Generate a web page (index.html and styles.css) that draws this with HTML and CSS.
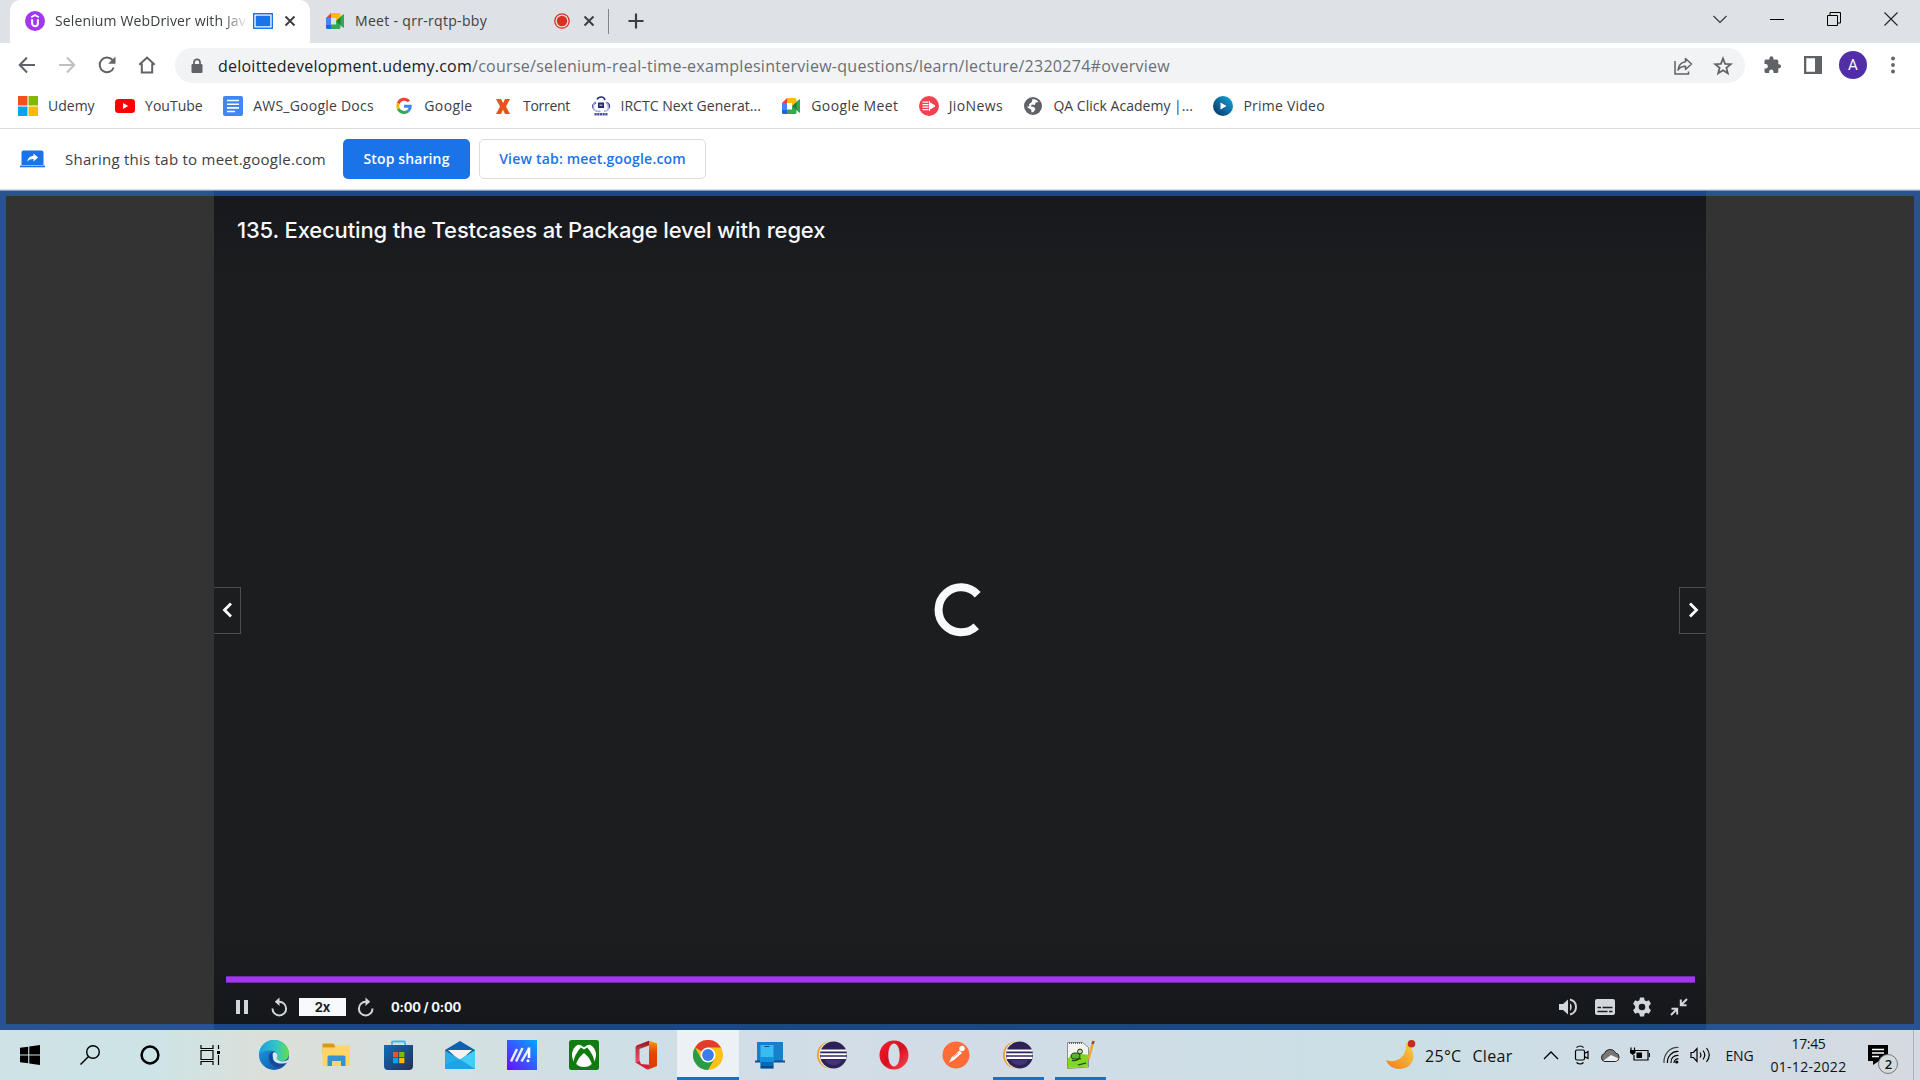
FILE: index.html
```html
<!DOCTYPE html>
<html lang="en">
<head>
<meta charset="utf-8">
<title>Selenium WebDriver with Java</title>
<link rel="stylesheet" href="styles.css">
</head>
<body>
<svg class="defs" width="0" height="0">
  <defs>
    <linearGradient id="edgeA" x1="0" y1="0" x2="1" y2="0"><stop offset="0" stop-color="#1b9de2"/><stop offset=".6" stop-color="#35c6c0"/><stop offset="1" stop-color="#66e04a"/></linearGradient>
    <linearGradient id="edgeB" x1="0" y1="0" x2="1" y2="1"><stop offset="0" stop-color="#1fa0e8"/><stop offset="1" stop-color="#0c4a9a"/></linearGradient>
    <linearGradient id="storeG" x1="0" y1="0" x2="1" y2="1"><stop offset="0" stop-color="#0f6cbd"/><stop offset="1" stop-color="#262f52"/></linearGradient>
    <linearGradient id="asusG" x1="1" y1="0" x2="0" y2="1"><stop offset="0" stop-color="#00a8ff"/><stop offset="1" stop-color="#6a0cff"/></linearGradient>
    <linearGradient id="moonG" x1="1" y1="0" x2="0" y2="1"><stop offset="0" stop-color="#f8cf45"/><stop offset="1" stop-color="#ef7d1c"/></linearGradient>
    <linearGradient id="operaG" x1="0" y1="0" x2="1" y2="1"><stop offset="0" stop-color="#ff1b2d"/><stop offset=".5" stop-color="#d3101f"/><stop offset="1" stop-color="#ff4a55"/></linearGradient>
    <linearGradient id="primeG" x1="1" y1="0" x2="0" y2="1"><stop offset="0" stop-color="#18a8e0"/><stop offset="1" stop-color="#04305e"/></linearGradient>
    <linearGradient id="officeG" x1="0" y1="0" x2="0" y2="1"><stop offset="0" stop-color="#8c1010"/><stop offset=".4" stop-color="#c43a4a"/><stop offset="1" stop-color="#e8506a"/></linearGradient>
    <linearGradient id="officeH" x1="0" y1="0" x2="0" y2="1"><stop offset="0" stop-color="#f59a12"/><stop offset=".4" stop-color="#e04a08"/><stop offset="1" stop-color="#d83b01"/></linearGradient>
    <symbol id="meet" viewBox="0 0 20 20"><path d="M1 7 6 2v5z" fill="#ea4335"/><path d="M6 2h8a1.500 1.500 0 0 1 1.500 1.500V7L11 10V7H6z" fill="#fbbc04"/><path d="M1 7h5v7H1z" fill="#4285f4"/><path d="M1 14h5v4H2.500A1.500 1.500 0 0 1 1 16.500z" fill="#1967d2"/><path d="M6 13.500h5V10l4.500 3v3.500A1.500 1.500 0 0 1 14 18H6z" fill="#34a853"/><path d="M11 10l7-6.200c.5-.4 1-.1 1 .5v11.400c0 .6-.5.9-1 .5z" fill="#188038"/><path d="M15.500 6l2.500-2.200c.5-.4 1-.1 1 .5v11.400c0 .6-.5.9-1 .5L15.500 14z" fill="#34a853"/></symbol>
    <symbol id="eclipse" viewBox="0 0 30 30"><ellipse cx="13" cy="15" rx="13" ry="13.500" fill="#f29a2e"/><ellipse cx="14.800" cy="15" rx="13" ry="13.800" fill="#f1e6d8"/><circle cx="16.500" cy="15" r="13.500" fill="#2c2255"/><path d="M8 20c2 4 5 5 8.500 5s6.500-1 8.500-5z" fill="#4a3a8a" opacity=".7"/><path d="M3.500 10.500h26M3.200 14.200h26.500M3.500 18h26" stroke="#fff" stroke-width="1.800"/><path d="M3.500 16h26" stroke="#8d83b5" stroke-width="1.200"/></symbol>
    <symbol id="x" viewBox="0 0 12 12"><path d="M1.500 1.500l9 9M10.500 1.500l-9 9" stroke="#3c4043" stroke-width="2" fill="none"/></symbol>
  </defs>
</svg>

<header class="tabstrip">
  <div class="tab tab-active">
    <svg width="20" height="20" viewBox="0 0 20 20"><circle cx="10" cy="10" r="10" fill="#a435f0"/><path d="M6.200 6.300 10 4l3.800 2.300" fill="none" stroke="#fff" stroke-width="1.800"/><path d="M7.100 8.300v4a2.900 2.900 0 0 0 5.800 0v-4" fill="none" stroke="#fff" stroke-width="2"/></svg>
    <span class="tab-title fade">Selenium WebDriver with Jav</span>
    <svg class="tab-state" width="20" height="16" viewBox="0 0 20 16"><path d="M.7.700h18.600v14.600H.7z" fill="#fff" stroke="#1a73e8" stroke-width="1.400"/><path d="M2.700 2.700h14.600v10.600H2.700z" fill="#1a73e8"/></svg>
    <svg class="tab-close" width="12" height="12"><use href="#x"/></svg>
  </div>
  <div class="tab tab-meet">
    <svg width="20" height="20"><use href="#meet"/></svg>
    <span class="tab-title">Meet - qrr-rqtp-bby</span>
    <svg class="tab-state" width="16" height="16" viewBox="0 0 16 16"><circle cx="8" cy="8" r="7.200" fill="none" stroke="#d93025" stroke-width="1.300"/><circle cx="8" cy="8" r="5.200" fill="#d93025"/></svg>
    <svg class="tab-close" width="12" height="12"><use href="#x"/></svg>
  </div>
  <span class="tab-sep"></span>
  <svg class="newtab" width="16" height="16" viewBox="0 0 16 16"><path d="M8 .5v15M.5 8h15" stroke="#3c4043" stroke-width="2.200"/></svg>
  <div class="win-controls">
    <svg width="14" height="14" viewBox="0 0 14 14"><path d="M.5 4 7 10.500 13.500 4" fill="none" stroke="#333" stroke-width="1.100"/></svg>
    <svg width="14" height="14" viewBox="0 0 14 14"><path d="M0 7.500h14" stroke="#000"/></svg>
    <svg width="14" height="14" viewBox="0 0 14 14"><path d="M.5 3.500h10v10H.5zM3 3.500V.5h10.500v10.500h-3" fill="none" stroke="#000"/></svg>
    <svg width="14" height="14" viewBox="0 0 14 14"><path d="M.5.500l13 13M13.500.500l-13 13" stroke="#222" stroke-width="1.100"/></svg>
  </div>
</header>

<div class="toolbar">
  <nav class="nav-buttons">
    <svg width="20" height="20" viewBox="0 0 20 20"><path d="M18 10H3M10 2.500 2.700 10l7.300 7.500" fill="none" stroke="#5f6368" stroke-width="2"/></svg>
    <svg width="20" height="20" viewBox="0 0 20 20"><path d="M2 10h15M10 2.500l7.300 7.500-7.300 7.500" fill="none" stroke="#bdc1c6" stroke-width="2"/></svg>
    <svg width="20" height="20" viewBox="0 0 20 20"><path d="M16.800 12.500A7.300 7.300 0 1 1 15.500 5" fill="none" stroke="#5f6368" stroke-width="2"/><path d="M18.500 1.500v7.300h-7.300z" fill="#5f6368"/></svg>
    <svg width="20" height="20" viewBox="0 0 20 20"><path d="M2.300 9.700 10 2.500l7.700 7.200M4.800 8.500v9h10.400v-9" fill="none" stroke="#5f6368" stroke-width="2"/></svg>
  </nav>
  <div class="omnibox">
    <svg width="12" height="16" viewBox="0 0 12 16"><path d="M3 6.500V4.300a3 3 0 0 1 6 0v2.200" fill="none" stroke="#5f6368" stroke-width="1.700"/><rect x=".5" y="6" width="11" height="9" rx="1.300" fill="#5f6368"/></svg>
    <span class="url"><span class="host">deloittedevelopment.udemy.com</span><span class="path">/course/selenium-real-time-examplesinterview-questions/learn/lecture/2320274#overview</span></span>
    <svg class="share" width="20" height="20" viewBox="0 0 20 20"><path d="M2 5v13h13.500v-2.500" fill="none" stroke="#5f6368" stroke-width="1.500"/><path d="M12.500 2.500 18.500 8l-6 5.500v-3.300c-3.500 0-5.800 1-7.500 3.800.5-4 2.800-7.600 7.500-8.200z" fill="none" stroke="#5f6368" stroke-width="1.500" stroke-linejoin="round"/></svg>
    <svg width="20" height="20" viewBox="0 0 20 20"><path d="M10 2.500l2.100 5.300 5.700.4-4.400 3.600 1.400 5.500L10 14.300l-4.800 3 1.400-5.500-4.400-3.600 5.700-.4z" fill="none" stroke="#5f6368" stroke-width="1.800"/></svg>
  </div>
  <div class="actions">
    <svg width="20" height="20" viewBox="0 0 20 20"><path d="M16.500 9.300h-1.200V6A1.600 1.600 0 0 0 13.700 4.400h-3.300V3.200a2 2 0 0 0-4 0v1.200H3A1.600 1.600 0 0 0 1.500 6v3h1.200a2.200 2.200 0 0 1 0 4.400H1.500v3A1.600 1.600 0 0 0 3 18h3.100v-1.200a2.200 2.200 0 0 1 4.400 0V18h3.200a1.600 1.600 0 0 0 1.600-1.600v-3.200h1.200a2 2 0 0 0 0-3.900z" fill="#5f6368"/></svg>
    <svg width="20" height="20" viewBox="0 0 20 20"><path d="M1 1h18v18H1zM3.300 3.300v13.400H12V3.300z" fill="#5f6368" fill-rule="evenodd"/></svg>
    <span class="avatar">A</span>
    <svg width="4" height="18" viewBox="0 0 4 18"><g fill="#5f6368"><circle cx="2" cy="2.500" r="1.900"/><circle cx="2" cy="9" r="1.900"/><circle cx="2" cy="15.500" r="1.900"/></g></svg>
  </div>
</div>

<nav class="bookmarks">
  <a><svg width="20" height="20" viewBox="0 0 20 20"><path d="M0 0h9.500v9.500H0z" fill="#f25022"/><path d="M10.500 0H20v9.500h-9.500z" fill="#7fba00"/><path d="M0 10.500h9.500V20H0z" fill="#00a4ef"/><path d="M10.500 10.500H20V20h-9.500z" fill="#ffb900"/></svg><span>Udemy</span></a>
  <a><svg width="20" height="20" viewBox="0 0 20 20"><rect y="3" width="20" height="14" rx="3.500" fill="#f00"/><path d="M8 7l5.200 3L8 13z" fill="#fff"/></svg><span>YouTube</span></a>
  <a class="ls-2"><svg width="20" height="20" viewBox="0 0 20 20"><rect width="20" height="20" rx="2" fill="#4285f4"/><path d="M4 4.500h12M4 8.200h12M4 11.900h12M4 15.500h8" stroke="#fff" stroke-width="1.600"/></svg><span>AWS_Google Docs</span></a>
  <a class="ls-3"><svg width="20" height="20" viewBox="0 0 20 20"><g fill="none" stroke-width="3"><path d="M15 5.200A6.400 6.400 0 0 0 4.300 7.400" stroke="#ea4335"/><path d="M4.300 7.400a6.400 6.400 0 0 0 0 5.400" stroke="#fbbc05"/><path d="M4.300 12.800a6.400 6.400 0 0 0 10 2" stroke="#34a853"/><path d="M14.300 14.800A6 6 0 0 0 16.300 10.200H10" stroke="#4285f4"/></g></svg><span>Google</span></a>
  <a class="ls-tight"><svg width="20" height="20" viewBox="0 0 20 20"><path d="M3 3h5l2.200 4L12 3h5l-4 7.500L17 18h-5l-2-4.300L8 18H3l4-7.500z" fill="#e5541b"/></svg><span>Torrent</span></a>
  <a class="ls-0"><svg width="20" height="20" viewBox="0 0 20 20"><path d="M6 3.500Q7 1 10.500 1 13 1 14 4M5 6.500Q0 9 2.500 12.500M15.500 6.500Q20 9 17.500 12.500" fill="none" stroke="#23297e" stroke-width="1.600"/><path d="M4.500 5.500q-3.500 4-1.500 8 3.500 3 6.500 1.500M15 6q3.500 4 2 7.500-2 2-4 1.700" fill="none" stroke="#a9acd8" stroke-width="1.600"/><path d="M7 6.500h6v5.500H7z" fill="#23297e"/><path d="M8.500 9.200h3" stroke="#c9cbe8" stroke-width="1.200"/><path d="M3.500 18.200h13.500" stroke="#4a4f9c" stroke-width="2.600" stroke-dasharray="2.200 .5"/></svg><span>IRCTC Next Generat...</span></a>
  <a class="ls-3"><svg width="20" height="20"><use href="#meet"/></svg><span>Google Meet</span></a>
  <a class="ls-3"><svg width="20" height="20" viewBox="0 0 20 20"><circle cx="10" cy="10" r="10" fill="#f5414f"/><path d="M3.500 6.200h6M3.500 8.700h6M3.500 11.200h6M3.500 13.700h6" stroke="#fff" stroke-width="1.300"/><path d="M10.500 5v10M11.500 7l4.500 3-4.500 3z" stroke="#fff" stroke-width="1" fill="#fff"/></svg><span>JioNews</span></a>
  <a class="ls-0"><svg width="20" height="20" viewBox="0 0 20 20"><circle cx="10" cy="10" r="9" fill="#5f6368"/><path d="M9 3.500c3-1 5 .5 6.500 2.500l-2.800.5-1 2.500-3-.5-.7 2 3 .5 1.500 2-2 3-2 .5-.3-3-3-1.500L3 9.500C3.500 11 8 11 6 8.500 7 7 10 6.500 9 3.500z" fill="#fff"/></svg><span>QA Click Academy |...</span></a>
  <a class="ls-2"><svg width="20" height="20" viewBox="0 0 20 20"><circle cx="10" cy="10" r="10" fill="url(#primeG)"/><path d="M7.500 6.500l6 3.500-6 3.500z" fill="#fff"/></svg><span>Prime Video</span></a>
</nav>

<section class="infobar">
  <svg width="25" height="18" viewBox="0 0 25 18"><path d="M3.500.500h18a2 2 0 0 1 2 2V15h-22V2.500a2 2 0 0 1 2-2z" fill="#1a73e8"/><path d="M0 15.500h25v1.800H0z" fill="#1a73e8"/><path d="M13.500 3.500 18 7.500l-4.500 4V9c-3 0-4.800.7-6.300 2.800.5-3 2.300-5.500 6.300-6z" fill="#fff"/></svg>
  <span class="info-text">Sharing this tab to meet.google.com</span>
  <button class="btn btn-primary">Stop sharing</button>
  <button class="btn btn-plain">View tab: meet.google.com</button>
</section>

<main class="shared">
  <section class="player">
    <h1 class="lecture">135. Executing the Testcases at Package level with regex</h1>
    <div class="stage">
      <span class="side prev"><svg width="11" height="16" viewBox="0 0 11 16"><path d="M9 1.500 2.500 8 9 14.500" fill="none" stroke="#fff" stroke-width="2.800"/></svg></span>
      <svg class="spinner" width="54" height="54" viewBox="0 0 54 54"><path d="M43.700 11.700A22.500 22.500 0 1 0 42.300 43.400" fill="none" stroke="#f7f9fa" stroke-width="8"/></svg>
      <span class="side next"><svg width="11" height="16" viewBox="0 0 11 16"><path d="M2 1.500 8.500 8 2 14.500" fill="none" stroke="#fff" stroke-width="2.800"/></svg></span>
    </div>
    <div class="progress"></div>
    <div class="controls">
      <svg class="pause" width="12" height="14" viewBox="0 0 12 14"><path d="M0 0h4v14H0zM8 0h4v14H8z" fill="#d1d7dc"/></svg>
      <svg class="back" width="18" height="20" viewBox="0 0 18 20"><path d="M2.500 11.500A6.800 6.800 0 1 0 9 4.800" fill="none" stroke="#d1d7dc" stroke-width="2"/><path d="M9.500.500v8.600L4.800 4.800z" fill="#d1d7dc"/></svg>
      <span class="rate">2x</span>
      <svg class="fwd" width="18" height="20" viewBox="0 0 18 20"><path d="M15.500 11.500A6.800 6.800 0 1 1 9 4.800" fill="none" stroke="#d1d7dc" stroke-width="2"/><path d="M8.500.500v8.600l4.700-4.300z" fill="#d1d7dc"/></svg>
      <span class="time">0:00 / 0:00</span>
      <div class="right">
        <svg width="20" height="20" viewBox="0 0 20 20"><path d="M1 7v6h4l5 4.500v-15L5 7z" fill="#d1d7dc"/><path d="M12 6.200c2.200 1.500 2.200 6 0 7.600z" fill="#d1d7dc"/><path d="M12 2.500c8 2 8 13 0 15" fill="none" stroke="#d1d7dc" stroke-width="1.900"/></svg>
        <svg width="20" height="20" viewBox="0 0 20 20"><rect y="2" width="20" height="16" rx="2" fill="#d1d7dc"/><path d="M2.500 10.500H6M7.500 10.500h10M2.500 14.500h10M14 14.500h3.500" stroke="#1c1d1f" stroke-width="1.600"/></svg>
        <svg width="20" height="20" viewBox="0 0 20 20"><path d="M8 .5h4l.6 2.700 1.700 1 2.600-.9 2 3.500L16.900 9v2l2 2.200-2 3.500-2.600-.9-1.700 1-.6 2.700H8l-.6-2.700-1.700-1-2.600.9-2-3.500L3.100 11V9l-2-2.200 2-3.500 2.600.9 1.700-1zM10 6.700a3.300 3.300 0 1 0 0 6.600 3.300 3.300 0 0 0 0-6.600z" fill="#d1d7dc" fill-rule="evenodd"/></svg>
        <svg width="20" height="20" viewBox="0 0 20 20"><path d="M18 2l-5.500 5.500M11.800 2.500v5.700h5.700M2 18l5.500-5.500M2.500 11.800h5.700v5.700" fill="none" stroke="#d1d7dc" stroke-width="2"/></svg>
      </div>
    </div>
  </section>
</main>

<footer class="taskbar">
  <div class="apps">
    <span class="app sys"><svg width="20" height="20" viewBox="0 0 20 20"><path d="M0 2.800 8.200 1.700v7.800H0zM9.300 1.500 20 0v9.500H9.300zM0 10.500h8.200v7.800L0 17.200zM9.300 10.500H20V20L9.300 18.500z"/></svg></span>
    <span class="app sys"><svg width="20" height="20" viewBox="0 0 20 20"><circle cx="13" cy="7" r="6.300" fill="none" stroke="#000" stroke-width="1.400"/><path d="M8.500 11.500.5 19.500" stroke="#000" stroke-width="1.500"/></svg></span>
    <span class="app sys"><svg width="20" height="20" viewBox="0 0 20 20"><circle cx="10" cy="10" r="8.400" fill="none" stroke="#000" stroke-width="2.500"/></svg></span>
    <span class="app sys"><svg width="20" height="20" viewBox="0 0 20 20"><path d="M1 0v3.500h12V0M1 20v-3.500h12V20M1 5.500h12v9H1zM18.500 0v4M18.500 10v10" fill="none" stroke="#000" stroke-width="1.200"/><path d="M17 6h3v3h-3z"/></svg></span>
    <span class="app pinned-first"><svg width="30" height="30" viewBox="0 0 30 30"><circle cx="15" cy="15" r="15" fill="url(#edgeB)"/><path d="M0 14C.5 6 7 0 15 0c9 0 15 6.500 15 13.500 0 5-4 8-8.500 8-4 0-5-1.500-4-3 2.500-3.500 0-8-5.500-8-5 0-9.500 1.500-12 3.500z" fill="url(#edgeA)"/><path d="M10 17c-.5 6.500 5 11 11 10 2.500-.5 5.500-2.500 7-5.500-6 2.800-13 1.500-14.500-3-1-3 1-6 2.500-7-3.500-.3-6 2-6 5.500z" fill="#15479a"/><path d="M14 17.500c0-2.500-1-4 .5-5 3-1 5 3 3.500 5-.7 1.200 0 2 1.500 3 3 1.500 7 1 9.500-.8l.5 2c-6 3.500-15.500 2-15.500-4.200z" fill="#d7e8ee"/></svg></span>
    <span class="app"><svg width="30" height="30" viewBox="0 0 30 30"><path d="M1.500 3.500h11l2 3H28V14H1.500z" fill="#dc9a10"/><path d="M1.500 7.500h12l2-2H29v20.500H1.500z" fill="#ffd566"/><path d="M6.500 26v-9q0-1.500 1.500-1.500h15q1.500 0 1.500 1.500v9h-4.500v-5h-9v5z" fill="#3a8fd6"/></svg></span>
    <span class="app"><svg width="30" height="30" viewBox="0 0 30 30"><path d="M9 6V2.500Q9 1.500 10 1.500h11Q22 1.500 22 2.500V6" fill="none" stroke="#39bdf0" stroke-width="1.900"/><path d="M1 5h29v21q0 4-4 4H5q-4 0-4-4z" fill="url(#storeG)"/><path d="M10 12h5.200v5.200H10z" fill="#f25022"/><path d="M16.200 12h5.200v5.200h-5.200z" fill="#7fba00"/><path d="M10 18h5.200v5.200H10z" fill="#00a4ef"/><path d="M16.200 18h5.200v5.200h-5.200z" fill="#ffb900"/></svg></span>
    <span class="app"><svg width="30" height="30" viewBox="0 0 30 30"><path d="M0 10 15 1l15 9v8H0z" fill="#0a62b0"/><path d="M3 10h24L15 21z" fill="#f3f3f5"/><path d="M0 10.500 15 19.500 30 10.500V29H0z" fill="#25aeea"/><path d="M15 19.500 30 10.500V29z" fill="#45cdf5"/><path d="M15 19.500 30 29H0V24z" fill="#1b9be0" opacity=".6"/></svg></span>
    <span class="app"><svg width="30" height="30" viewBox="0 0 30 30"><path d="M0 0h30v30H0z" fill="url(#asusG)"/><path d="M4 21.500 10 9M9 21.500 15.500 8M14.500 21.500 22 8.500" stroke="#e6ecff" stroke-width="2.500" fill="none"/><path d="M22 7.500V18" stroke="#fff" stroke-width="2.600"/><circle cx="21" cy="20.800" r="1.500" fill="#fff"/></svg></span>
    <span class="app"><svg width="30" height="30" viewBox="0 0 30 30"><rect width="30" height="30" rx="2.500" fill="#107c10"/><circle cx="15" cy="15" r="12" fill="#fff"/><path d="M7.500 4.600C10 4 12.500 5.500 15 7.200c2.500-1.700 5-3.200 7.500-2.600L21 1.500H9zM15 9.500l-3.200-2C8 12 4.500 17.500 4.800 22.500l2.200 2.800c.7-5 4.500-9.500 8-12.300 3.500 2.800 7.300 7.300 8 12.300l2.200-2.800c.3-5-3.200-10.500-7-15z" fill="#107c10"/></svg></span>
    <span class="app"><svg width="30" height="30" viewBox="0 0 30 30"><path d="M18 .8 6 5.200 4.500 7v15.500l4-2V9l9.500-3.500z" fill="url(#officeG)"/><path d="M18 .8 26 3.500V26l-8 3.200z" fill="url(#officeH)"/><path d="M4.500 22.500 8.500 20.500 10 24l8 .8v4.400l-2 .3z" fill="#d8203a"/></svg></span>
    <span class="app focused"><svg width="30" height="30" viewBox="0 0 30 30"><circle cx="15" cy="15" r="15" fill="#fbc116"/><path d="M15 15 2 7.500A15 15 0 0 1 28 7.500H15z" fill="#e33b2e"/><path d="M2 7.500A15 15 0 0 0 15 30l6.500-11.300L15 15l-6.500 3.700z" fill="#2a9b48"/><circle cx="15" cy="15" r="7.500" fill="#fff"/><circle cx="15" cy="15" r="5.900" fill="#3b7ded"/></svg></span>
    <span class="app"><svg width="30" height="30" viewBox="0 0 30 30"><path d="M2 2h26v19H2z" fill="#1580cc"/><path d="M0 20.500h30v2H0z" fill="#0c5192"/><path d="M5.500 5h13v23.500h-13z" fill="#38bdf2"/><path d="M5.500 17h13v5h-13z" fill="#1690dc"/><path d="M5.500 22h13v4h-13z" fill="#0768b8"/><path d="M5.500 26h13v2.500h-13z" fill="#0a4a86"/><path d="M9.500 6.500h5" stroke="#0c5192"/></svg></span>
    <span class="app"><svg width="30" height="30"><use href="#eclipse"/></svg></span>
    <span class="app"><svg width="30" height="30" viewBox="0 0 30 30"><path d="M15 .5a14.500 14.500 0 1 0 0 29 14.500 14.500 0 0 0 0-29zm0 3c3.500 0 5.700 5 5.700 11.500S18.500 26.500 15 26.500 9.300 21.500 9.300 15 11.500 3.500 15 3.500z" fill="url(#operaG)" fill-rule="evenodd"/></svg></span>
    <span class="app"><svg width="30" height="30" viewBox="0 0 30 30"><circle cx="15" cy="15" r="13.500" fill="#ff6c37"/><circle cx="21" cy="8.500" r="2.700" fill="#fff"/><path d="M18.500 10.500 21 13l-8 7-5 2.500 2.500-5z" fill="#fff"/><path d="M12.500 17 17 13" stroke="#ff6c37" stroke-width=".8"/></svg></span>
    <span class="app running"><svg width="30" height="30"><use href="#eclipse"/></svg></span>
    <span class="app running"><svg width="30" height="30" viewBox="0 0 30 30"><path d="M2.500 2.500h15l6 5V27l-21 1.500z" fill="#f2f5f0" stroke="#777" stroke-width=".8"/><path d="M3 18q10-6 20-3v11.500L3 28z" fill="#80d820"/><path d="M4 3h13" stroke="#666" stroke-width="2" stroke-dasharray="1 1"/><ellipse cx="10.500" cy="16" rx="4.500" ry="3" fill="#54b82c" stroke="#1c3a12"/><circle cx="15" cy="11.500" r="2.400" fill="#b9e29a" stroke="#222"/><path d="M7 20c4 3 7-3 9-1M13 25l8-2" stroke="#1c3a12" fill="none" stroke-width="1.200"/><path d="M28 2.500 23.500 19" stroke="#e6ab2c" stroke-width="2.500"/><path d="M28.500 1l-.8 3" stroke="#8c4a38" stroke-width="2.500"/></svg></span>
  </div>
  <div class="tray">
    <svg class="moon" width="30" height="30" viewBox="0 0 30 30"><path d="M20 3c13 9 8 26-7 26C7 29 2 25.500 0 20c10 4 21-2 20-17z" fill="url(#moonG)"/><circle cx="25.500" cy="3.800" r="3.800" fill="#c42b1c"/></svg>
    <span class="temp">25°C</span>
    <span class="sky">Clear</span>
    <svg class="caret" width="16" height="16" viewBox="0 0 16 16"><path d="M1 12 8 5l7 7" fill="none" stroke="#000" stroke-width="1.300"/></svg>
    <svg class="cam" width="16" height="20" viewBox="0 0 16 20"><path d="M2.500 2.500q4-3 7 0M2.500 17.500q4 3 7 0M3 5h6q1.500 0 1.500 1.500v7Q10.500 15 9 15H3q-1.500 0-1.500-1.500v-7Q1.500 5 3 5zM10.500 8.500l3.500-2v7l-3.500-2" fill="none" stroke="#000" stroke-width="1.200"/></svg>
    <svg class="cloud" width="20" height="16" viewBox="0 0 20 16"><path d="M5 14.500a4 4 0 0 1-.7-7.800A6 6 0 0 1 15.500 6a4.300 4.300 0 0 1-.2 8.500z" fill="#777" stroke="#222"/><path d="M3.500 13.500 11 8l7.500 3.500q-1 2.500-3.200 2.500H5z" fill="#eee"/></svg>
    <svg class="batt" width="20" height="16" viewBox="0 0 20 16"><path d="M5 3.500h13v9.500H4V8" fill="none" stroke="#000" stroke-width="1.200"/><path d="M6.500 5.500H12V11H6.500z"/><path d="M19.400 6v4M1 .5v3M4.500.500v3" stroke="#000" stroke-width="1.200"/><path d="M0 3h5.500v3L2.700 8 0 6z"/></svg>
    <svg class="wifi" width="16" height="18" viewBox="0 0 16 18"><g fill="none" stroke="#000" stroke-width="1.200"><path d="M1 17C.5 8 7 1 15.500 1.500" opacity=".7"/><path d="M4.500 17C4 10.500 9 5 15.500 5.500M8 17c-.5-5 3-8 7.500-7.500M11 17c0-2.500 2-4.500 4.500-4"/></g><circle cx="13.800" cy="16" r="1.600"/></svg>
    <svg class="vol" width="22" height="18" viewBox="0 0 22 18"><g fill="none" stroke="#000" stroke-width="1.200"><path d="M1 6.500v5h2.500L7 15.500v-13L3.500 6.500z"/><path d="M10 6.500q1.800 2.500 0 5M13 4.500q3.500 4.500 0 9M16.500 2q5.500 7 0 14"/></g></svg>
    <span class="lang">ENG</span>
    <div class="clock"><span class="hour">17:45</span><span class="date">01-12-2022</span></div>
    <div class="notes"><svg width="20" height="20" viewBox="0 0 20 20"><path d="M0 0h20v16h-9l-6 4v-4H0z"/><path d="M4 4.500h12M4 8h12M4 11.500h7" stroke="#fff" stroke-width="1.300"/></svg><span class="badge">2</span></div>
  </div>
</footer>
</body>
</html>
```
FILE: styles.css
```css
* { box-sizing: border-box; }
body { margin: 0; width: 1920px; height: 1080px; overflow: hidden; display: flex; flex-direction: column; background: #fff; font-family: "Open Sans", "Noto Sans", sans-serif; color: #3c4043; }
svg { display: block; flex: none; }
span { white-space: nowrap; }
.defs { position: absolute; }

.tabstrip { height: 43px; flex: none; background: #dee1e6; display: flex; align-items: center; padding-left: 10px; }
.tab { height: 43px; width: 299px; display: flex; align-items: center; padding: 0 14px 1px 15px; font-size: 14px; }
.tab-active { width: 300px; background: #fff; border-radius: 10px 10px 0 0; }
.tab-title { margin-left: 10px; flex: 1; overflow: hidden; letter-spacing: .31px; padding-bottom: 1px; }
.fade { letter-spacing: .13px; -webkit-mask-image: linear-gradient(90deg, #000 168px, transparent 193px); }
.tab-close { margin-left: 11px; }
.tab-meet .tab-close { margin-left: 13px; }
.tab-sep { width: 1px; height: 25px; margin-left: -1px; background: #80868b; }
.newtab { margin-left: 19px; margin-bottom: 1px; }
.win-controls { margin-left: auto; display: flex; gap: 43px; padding: 0 22px 6px 0; }

.toolbar { height: 45px; flex: none; display: flex; align-items: center; }
.nav-buttons { display: flex; gap: 20px; padding: 0 0 1px 17px; width: 175px; }
.omnibox { width: 1570px; height: 35px; border-radius: 18px; background: #f1f3f4; display: flex; align-items: center; padding: 0 12px 0 16px; }
.url { margin-left: 15px; font-size: 16px; display: flex; letter-spacing: .28px; }
.host { color: #202124; letter-spacing: .23px; }
.path { color: #6b6f74; }
.share { margin-left: auto; margin-right: 20px; }
.actions { display: flex; align-items: center; margin-left: 18px; padding-bottom: 1px; }
.actions svg + svg { margin-left: 20px; }
.avatar { width: 28px; height: 28px; margin: 0 24px 0 16px; border-radius: 50%; background: #512da8; color: #fff; font: 15px/28px Roboto, sans-serif; text-align: center; }

.bookmarks { height: 41px; flex: none; display: flex; align-items: center; gap: 20.5px; padding: 0 0 5px 18px; border-bottom: 1px solid #dadce0; font-size: 14px; }
.bookmarks a { display: flex; align-items: center; gap: 10px; }
.bookmarks span { margin-top: -1px; }
.ls-0 { letter-spacing: .02px; }
.ls-2 { letter-spacing: .23px; }
.ls-3 { letter-spacing: .36px; }
.ls-tight { letter-spacing: -.29px; }

.infobar { position: relative; height: 61px; flex: none; display: flex; align-items: center; padding-left: 20px; border-bottom: 1px solid #dadce0; box-shadow: 0 1px #7d9fcb; }
.info-text { margin-left: 20px; font-size: 15px; letter-spacing: .26px; }
.btn { height: 40px; padding: 0 0 2px; border: 0; border-radius: 5px; font: 600 14px "Open Sans", sans-serif; letter-spacing: .12px; white-space: nowrap; }
.btn-primary { margin-left: 17px; width: 127px; background: #1a73e8; color: #fff; }
.btn-plain { margin-left: 9px; width: 227px; background: #fff; border: 1px solid #dadce0; color: #1a73e8; letter-spacing: .2px; }

.shared { height: 840px; flex: none; background: #333; border: 6px solid #28538f; display: flex; justify-content: center; }
.player { width: 1492px; margin: -6px 0; border: solid #1b4880; border-width: 6px 0; background: linear-gradient(#17181c, #1c1d1f 80px, #1c1d1f 740px, #15171b); display: flex; flex-direction: column; }
.lecture { margin: 0; height: 80px; padding: 17px 0 0 23px; font: 500 22px/34px Inter, sans-serif; letter-spacing: -.15px; color: #f7f9fa; }
.stage { flex: 1; display: flex; align-items: center; justify-content: space-between; padding-bottom: 32px; }
.side { width: 27px; height: 47px; border: 1px solid #4b4d50; display: flex; align-items: center; justify-content: center; }
.prev { border-left: 0; }
.next { border-right: 0; }
.spinner { margin-left: 1px; }
.progress { height: 7px; margin: 0 11px 0 12px; background: #a435f0; border: solid #702fa0; border-width: 1px 0; }
.controls { height: 41px; display: flex; align-items: center; padding: 7px 17px 0 22px; }
.back { margin-left: 22px; }
.rate { margin-left: 11px; width: 47px; height: 18px; background: #f7f9fa; color: #1c1d1f; font: 700 13px/18px Inter, sans-serif; text-align: center; }
.fwd { margin-left: 11px; }
.time { margin-left: 16px; font: 700 13px Inter, sans-serif; letter-spacing: -.23px; color: #f7f9fa; }
.right { margin-left: auto; display: flex; gap: 17px; }

.taskbar { height: 50px; flex: none; display: flex; background: linear-gradient(90deg, #cfe2e6, #cde4e6 8%, #dcdfd9 14%, #d5e0e0 22%, #cfdfe6 32%, #d3dce6 48%, #cbdfe5 72%, #d0dde6 84%, #d5dae0); color: #111; }
.apps { display: flex; }
.app { width: 62px; display: flex; align-items: center; justify-content: center; }
.sys { width: 60px; }
.pinned-first { margin-left: 3px; }
.focused { background: #ecf1f6; border-bottom: 3px solid #0078d7; padding-top: 3px; }
.running { background: linear-gradient(#0078d7, #0078d7) 50% 100% / 51px 3px no-repeat; }
.tray { margin-left: auto; width: 534px; display: flex; align-items: center; font-size: 14px; }
.temp, .sky { font-size: 16px; padding-top: 1px; letter-spacing: .3px; }
.temp { margin-left: 9px; }
.sky { margin-left: 11px; }
.caret { margin-left: 31px; }
.cam { margin-left: 15px; }
.cloud { margin-left: 10px; }
.batt { margin-left: 10px; }
.wifi { margin-left: 13px; }
.vol { margin-left: 11px; }
.lang { margin-left: 13px; letter-spacing: -.17px; }
.clock { width: 76px; margin-left: 17px; display: flex; flex-direction: column; align-items: center; line-height: 23px; padding-bottom: 1px; }
.hour { letter-spacing: -.34px; }
.date { letter-spacing: .29px; }
.notes { position: relative; margin-left: 22px; width: 46px; height: 50px; padding-top: 15px; border-right: 1px solid #a9b2b6; }
.badge { position: absolute; left: 10px; top: 24px; width: 20px; height: 20px; border: 1px solid #777; border-radius: 50%; background: #d5dadd; font: 600 13px/18px "Open Sans", sans-serif; text-align: center; }
```
